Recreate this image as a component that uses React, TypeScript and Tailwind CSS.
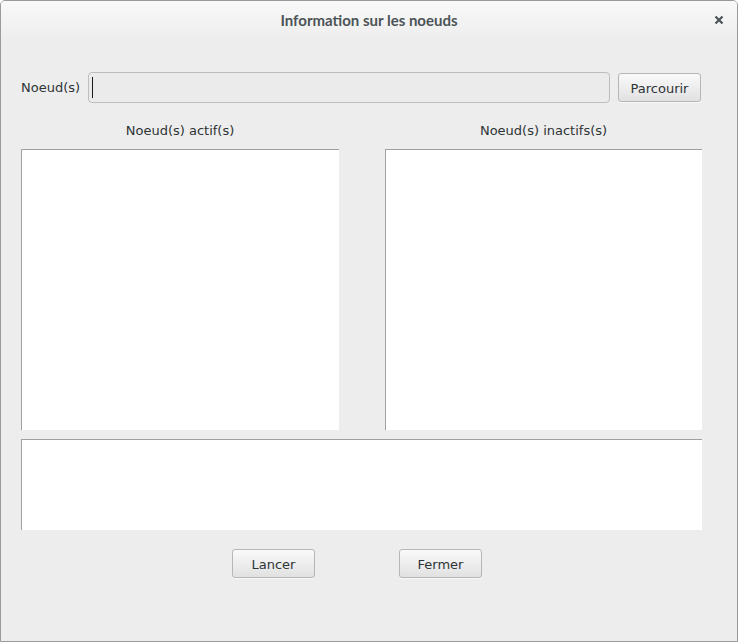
import React from "react";

const font = { fontFamily: '"DejaVu Sans", sans-serif' };

function Btn({ label }: { label: string }) {
  return (
    <button className="w-[83px] h-[29px] rounded-[3px] border border-[#b6b6b6] bg-gradient-to-b from-[#fafafa] to-[#e1e1e1] text-[13px] leading-[16px] pt-[2px] text-[#2e3436] shadow-[0_1px_0_rgba(255,255,255,0.6)]">
      {label}
    </button>
  );
}

export default function App() {
  return (
    <div
      className="w-[738px] h-[642px] border border-[#9a9a9a] rounded-t-[5px] bg-[#ededed] flex flex-col overflow-hidden"
      style={font}
    >
      <div className="h-[40px] shrink-0 bg-gradient-to-b from-[#f9f9f9] to-[#ededed] flex items-start pt-[10px] relative">
        <div className="flex-1 text-center font-bold text-[#4c5457] leading-[18px] text-[15px]" style={{ fontFamily: '"Lato", "Liberation Sans", sans-serif' }}>
          Information sur les noeuds
        </div>
        <div className="absolute right-[13px] top-[11px] w-[10px] h-[16px] flex items-center justify-center">
          <svg width="10" height="10" viewBox="0 0 10 10">
            <path d="M1.5 1.5 L8.5 8.5 M8.5 1.5 L1.5 8.5" stroke="#4c5457" strokeWidth="2.2" strokeLinecap="butt" />
          </svg>
        </div>
      </div>
      <div className="pl-[20px] w-[701px] flex flex-col">
        <div className="mt-[31px] h-[31px] flex items-center">
          <span className="text-[13px] text-[#2e3436] w-[67px]">Noeud(s)</span>
          <div className="w-[522px] h-[31px] rounded-[4px] border border-[#bdbdbd] bg-[#ebebeb] flex items-center pl-[3px]">
            <div className="w-[1px] h-[21px] bg-[#1a1a1a]" />
          </div>
          <div className="ml-[8px]">
            <Btn label="Parcourir" />
          </div>
        </div>
        <div className="mt-[19px] h-[18px] flex text-[13px] text-[#2e3436] leading-[18px]">
          <div className="w-[318px] text-center">Noeud(s) actif(s)</div>
          <div className="w-[46px]" />
          <div className="w-[317px] text-center">Noeud(s) inactifs(s)</div>
        </div>
        <div className="mt-[9px] h-[281px] flex">
          <div className="w-[318px] bg-white border-t border-l border-[#a0a0a0]" />
          <div className="w-[46px]" />
          <div className="w-[317px] bg-white border-t border-l border-[#a0a0a0]" />
        </div>
        <div className="mt-[9px] h-[91px] w-[681px] bg-white border-t border-l border-[#a0a0a0]" />
        <div className="mt-[19px] flex pl-[211px] gap-[84px]">
          <Btn label="Lancer" />
          <Btn label="Fermer" />
        </div>
      </div>
    </div>
  );
}
